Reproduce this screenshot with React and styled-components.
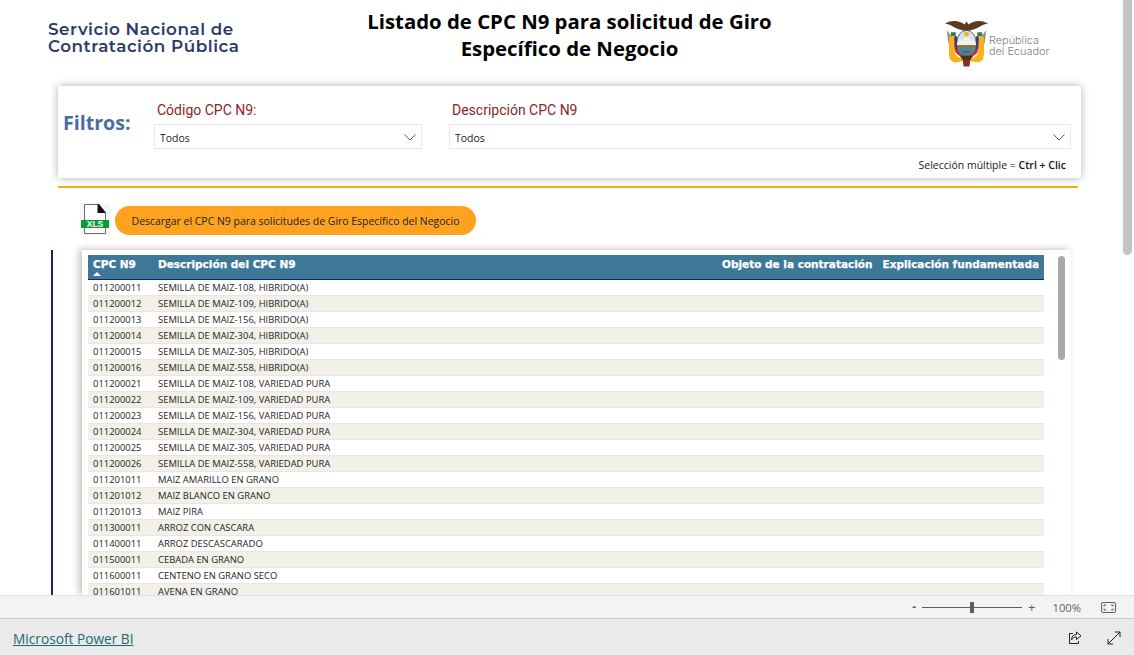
import React from 'react'
import styled, { createGlobalStyle } from 'styled-components'

const GlobalStyle = createGlobalStyle`
    html, body {
        margin: 0;
        padding: 0;
        height: 100%;
        overflow: hidden;
        background: #fff;
    }
`

const Viewer = styled.div`
    width: 1134px;
    height: 655px;
    display: flex;
    flex-direction: column;
    overflow: hidden;
    font-family: "Open Sans", "Noto Sans", sans-serif;
`

const Report = styled.main`
    position: relative;
    height: 595px;
    flex: none;
    overflow: hidden;
    background: #fff;
`

const PageScroll = styled.div`
    position: absolute;
    top: 0;
    right: 2px;
    width: 9px;
    height: 255px;
    border-radius: 0 0 5px 5px;
    background: #c4c4c4;
`

const Header = styled.header`
    height: 86px;
    display: grid;
    grid-template-columns: 340px 449px 1fr;
    align-items: start;
    box-sizing: border-box;
    padding-left: 48px;
`

const BrandName = styled.div`
    margin-top: 21px;
    font-family: "Montserrat", "Inter", sans-serif;
    font-size: 16.75px;
    line-height: 17px;
    font-weight: 600;
    letter-spacing: 0.55px;
    color: #2b3a67;
`

const Title = styled.h1`
    margin: 8px 0 0 -43px;
    width: 449px;
    text-align: center;
    font-size: 20.35px;
    line-height: 27px;
    font-weight: 700;
    color: #000;
`

const Republic = styled.div`
    display: flex;
    align-items: center;
    margin: 18px 0 0 107px;
`

const RepublicName = styled.div`
    margin-top: 5px;
    font-family: "Inter", sans-serif;
    font-size: 10.9px;
    line-height: 10.5px;
    font-weight: 300;
    color: #7d7d7d;
`

const FilterCard = styled.section`
    margin-left: 58px;
    width: 1023px;
    height: 92px;
    box-sizing: border-box;
    padding: 14px 10px 0 6px;
    display: grid;
    grid-template-columns: 90px 268px 27px 1fr;
    grid-template-rows: 24px 25px 1fr;
    background: #fff;
    box-shadow: 0 0 8px rgba(0, 0, 0, 0.32);
`

const FiltersLabel = styled.div`
    grid-row: 1 / span 2;
    align-self: center;
    margin: -4px 0 0 -1px;
    font-size: 19.6px;
    font-weight: 700;
    color: #4a6ca3;
`

const FieldLabel = styled.label`
    grid-column: ${p => p.$column};
    grid-row: 1;
    padding-left: 3px;
    font-family: "Roboto", sans-serif;
    font-size: 14px;
    line-height: 20px;
    color: #8a2525;
`

const Select = styled.div`
    grid-column: ${p => p.$column};
    grid-row: 2;
    display: flex;
    align-items: center;
    justify-content: space-between;
    box-sizing: border-box;
    padding: 2px 5px 0 5px;
    border: 1px solid #e9e9e9;
    font-size: 10.5px;
    color: #222;
`

const SelectionHint = styled.div`
    grid-column: 1 / -1;
    grid-row: 3;
    margin-top: 9px;
    padding-right: 5px;
    text-align: right;
    font-size: 10.5px;
    line-height: 14px;
    color: #222;

    b {
        font-weight: 600;
        color: #111;
    }
`

const GoldRule = styled.div`
    margin: 8px 0 0 58px;
    width: 1020px;
    height: 2px;
    background: #ecb116;
`

const DownloadRow = styled.div`
    display: flex;
    align-items: center;
    gap: 5px;
    margin: 15px 0 0 80px;
    height: 32px;
`

const DownloadButton = styled.button`
    width: 361px;
    height: 29px;
    margin-top: 3px;
    border: 0;
    padding: 0;
    border-radius: 15px;
    background: #ffa220;
    font-family: "Open Sans", sans-serif;
    font-size: 10.46px;
    color: #222;
`

const TableZone = styled.div`
    display: flex;
    margin: 15px 0 0 51px;
    height: 345px;
`

const NavyBar = styled.div`
    width: 2px;
    background: #1d2160;
`

const TableCard = styled.section`
    position: relative;
    margin-left: 29px;
    width: 989px;
    height: 345px;
    box-sizing: border-box;
    padding: 5px 27px 0 6px;
    background: #fff;
    box-shadow: -3px -1px 7px rgba(0, 0, 0, 0.24);
`

const TableScroll = styled.div`
    position: absolute;
    top: 6px;
    right: 6px;
    width: 7px;
    height: 104px;
    border-radius: 4px;
    background: #a9a9a9;
`

const Table = styled.table`
    width: 956px;
    border-collapse: collapse;
    table-layout: fixed;
`

const HeadRow = styled.tr`
    height: 24px;
    background: #3d7899;
    border-bottom: 1px solid #1d2160;
`

const HeadCell = styled.th`
    position: relative;
    padding: 2px 5px 0 5px;
    vertical-align: top;
    text-align: ${p => (p.$right ? 'right' : 'left')};
    font-family: "DejaVu Sans", sans-serif;
    font-size: 10.5px;
    line-height: 14px;
    font-weight: 700;
    color: #fff;
    white-space: nowrap;
    -webkit-text-stroke: 0.25px #fff;
`

const SortMark = styled.span`
    position: absolute;
    left: 5px;
    top: 17px;
    width: 0;
    height: 0;
    border-left: 4px solid transparent;
    border-right: 4px solid transparent;
    border-bottom: 4px solid #fff;
`

const Row = styled.tr`
    height: 16px;
    box-sizing: border-box;
    background: ${p => (p.$odd ? '#f3f0e9' : '#fff')};
    border-bottom: 1px solid #e6e6e6;
`

const Cell = styled.td`
    padding: 0 5px;
    font-family: "Open Sans", sans-serif;
    font-size: 9.42px;
    line-height: 15px;
    color: #252423;
    white-space: nowrap;
    overflow: hidden;
`

const ZoomBar = styled.div`
    position: relative;
    z-index: 1;
    height: 24px;
    flex: none;
    box-sizing: border-box;
    display: flex;
    align-items: center;
    justify-content: flex-end;
    padding-right: 18px;
    background: #f3f3f3;
    border-top: 1px solid #e1e1e1;
    border-bottom: 1px solid #c8c8c8;
    color: #605e5c;
`

const ZoomSign = styled.span`
    font-family: "Open Sans", sans-serif;
    font-size: ${p => (p.$bold ? 12 : 13)}px;
    line-height: 14px;
    font-weight: ${p => (p.$bold ? 700 : 400)};
`

const ZoomTrack = styled.div`
    position: relative;
    width: 100px;
    height: 1px;
    margin: 0 6px 0 6px;
    background: #605e5c;
`

const ZoomThumb = styled.div`
    position: absolute;
    left: 48px;
    top: -5px;
    width: 4px;
    height: 11px;
    background: #605e5c;
`

const ZoomValue = styled.span`
    margin: 0 20px 0 17px;
    font-family: "Open Sans", sans-serif;
    font-size: 11.2px;
    color: #605e5c;
`

const BottomBar = styled.footer`
    flex: 1;
    display: flex;
    align-items: center;
    justify-content: space-between;
    padding: 1px 13px 0;
    background: #eaeaea;
`

const PowerBiLink = styled.a`
    margin-top: 2px;
    font-family: "Open Sans", sans-serif;
    font-size: 13.7px;
    color: #1a6a70;
    text-decoration: underline;
`

const BottomActions = styled.div`
    display: flex;
    align-items: center;
    gap: 25px;
`

const rows = [
    ['011200011', 'SEMILLA DE MAIZ-108, HIBRIDO(A)'],
    ['011200012', 'SEMILLA DE MAIZ-109, HIBRIDO(A)'],
    ['011200013', 'SEMILLA DE MAIZ-156, HIBRIDO(A)'],
    ['011200014', 'SEMILLA DE MAIZ-304, HIBRIDO(A)'],
    ['011200015', 'SEMILLA DE MAIZ-305, HIBRIDO(A)'],
    ['011200016', 'SEMILLA DE MAIZ-558, HIBRIDO(A)'],
    ['011200021', 'SEMILLA DE MAIZ-108, VARIEDAD PURA'],
    ['011200022', 'SEMILLA DE MAIZ-109, VARIEDAD PURA'],
    ['011200023', 'SEMILLA DE MAIZ-156, VARIEDAD PURA'],
    ['011200024', 'SEMILLA DE MAIZ-304, VARIEDAD PURA'],
    ['011200025', 'SEMILLA DE MAIZ-305, VARIEDAD PURA'],
    ['011200026', 'SEMILLA DE MAIZ-558, VARIEDAD PURA'],
    ['011201011', 'MAIZ AMARILLO EN GRANO'],
    ['011201012', 'MAIZ BLANCO EN GRANO'],
    ['011201013', 'MAIZ PIRA'],
    ['011300011', 'ARROZ CON CASCARA'],
    ['011400011', 'ARROZ DESCASCARADO'],
    ['011500011', 'CEBADA EN GRANO'],
    ['011600011', 'CENTENO EN GRANO SECO'],
    ['011601011', 'AVENA EN GRANO'],
]

function Chevron() {
    return (
        <svg width="12" height="7" viewBox="0 0 12 7" fill="none">
            <path d="M.5.5 6 6l5.5-5.5" stroke="#4a5a78" strokeWidth="1" />
        </svg>
    )
}

function Emblem() {
    return (
        <svg width="45" height="50" viewBox="0 0 46 50">
            <path d="M1 5C8 1 16 2 21 6l2-3 2 3c5-4 13-5 20-1-6 1-9 4-14 6l-8 2-8-2C10 9 7 6 1 5Z" fill="#5b3a1e" />
            <path d="M3 12l6 8v14l-3-2-2-10Z" fill="#8b9096" />
            <path d="M43 12l-6 8v14l3-2 2-10Z" fill="#8b9096" />
            <path d="M7 14h5v4H7ZM34 14h5v4h-5Z" fill="#3b7a3a" />
            <path d="M5 18c1 5-1 17 1 23 1 3 6 5 11 3l6-2 6 2c5 2 10 0 11-3 2-6 0-18 1-23l-6 1c1 5 1 15-1 18-3 4-8 4-11 4s-8 0-11-4c-2-3-2-13-1-18Z" fill="#f7b21c" />
            <path d="M11 18c-1 6-1 13 1 17 2 3 7 5 11 5s9-2 11-5c2-4 2-11 1-17l-3 1c1 5 1 11-1 14-2 3-5 4-8 4s-6-1-8-4c-2-3-2-9-1-14Z" fill="#c8332e" />
            <path d="M10.5 18 12 31l2 1-1-14ZM35.5 18 34 31l-2 1 1-14Z" fill="#2d3a7a" />
            <ellipse cx="23" cy="25" rx="10" ry="13" fill="#d8e4ec" stroke="#3a3a3a" strokeWidth="0.8" />
            <circle cx="23" cy="16" r="2.5" fill="#f2b233" />
            <path d="M14 24l5-2 4-4 4 4 5 2 1 3H13Z" fill="#f4f1e6" />
            <path d="M13.5 27h19l-1 3h-17Z" fill="#7e7a4e" />
            <path d="M14.5 30h17c-1 4-4 8-8.5 8S15.5 34 14.5 30Z" fill="#3c8aa8" />
            <path d="M18 33h10l-2 2h-6Z" fill="#7a5a3a" />
            <path d="M19 41h8l-1 8h-6Z" fill="#8b2a20" />
            <path d="M16 38h14l-3 4h-8Z" fill="#4a3220" />
        </svg>
    )
}

function XlsIcon() {
    return (
        <svg width="30" height="32" viewBox="0 0 30 32">
            <rect width="30" height="32" fill="#f6f6f6" />
            <path d="M4.5 1.5h14l7 8v21h-21Z" fill="#fff" stroke="#6a6a6a" />
            <path d="M17.5 1H19l7 9h-8.500Z" fill="#111" />
            <rect x="1" y="17" width="28" height="8" fill="#0b9a36" />
            <text x="15" y="24" textAnchor="middle" fontFamily="Liberation Sans, sans-serif" fontSize="8.5" fontWeight="700" fill="#fff">XLS</text>
        </svg>
    )
}

function FitIcon() {
    return (
        <svg width="15" height="11" viewBox="0 0 15 11" fill="none" stroke="#605e5c">
            <rect x=".5" y=".5" width="14" height="10" rx="1.5" />
            <path d="M3 4.500V3h2M12 4.500V3h-2M3 6.500V8h2M12 6.500V8h-2" />
        </svg>
    )
}

function ShareIcon() {
    return (
        <svg width="14" height="14" viewBox="0 0 14 14" fill="none" stroke="#222" strokeWidth="1">
            <path d="M5 2.500H1.500v10h9V10" />
            <path d="M8.500 1v2.500C5.500 3.500 3.500 5.500 3.500 9c1-2 2.500-3 5-3v2.500L13 4.800Z" />
        </svg>
    )
}

function ExpandIcon() {
    return (
        <svg width="14" height="14" viewBox="0 0 14 14" fill="none" stroke="#222" strokeWidth="1">
            <path d="M1 13 13 1M8 1h5v5M1 8v5h5" />
        </svg>
    )
}

export default function App() {
    return (
        <Viewer>
            <GlobalStyle />
            <Report>
                <Header>
                    <BrandName>Servicio Nacional de<br />Contratación Pública</BrandName>
                    <Title>Listado de CPC N9 para solicitud de Giro Específico de Negocio</Title>
                    <Republic>
                        <Emblem />
                        <RepublicName>República<br />del Ecuador</RepublicName>
                    </Republic>
                </Header>
                <FilterCard>
                    <FiltersLabel>Filtros:</FiltersLabel>
                    <FieldLabel $column={2}>Código CPC N9:</FieldLabel>
                    <Select $column={2}>Todos<Chevron /></Select>
                    <FieldLabel $column={4}>Descripción CPC N9</FieldLabel>
                    <Select $column={4}>Todos<Chevron /></Select>
                    <SelectionHint>Selección múltiple = <b>Ctrl + Clic</b></SelectionHint>
                </FilterCard>
                <GoldRule />
                <DownloadRow>
                    <XlsIcon />
                    <DownloadButton>Descargar el CPC N9 para solicitudes de Giro Específico del Negocio</DownloadButton>
                </DownloadRow>
                <TableZone>
                    <NavyBar />
                    <TableCard>
                        <TableScroll />
                        <Table>
                            <colgroup>
                                <col width="65" />
                                <col width="564" />
                                <col width="160" />
                                <col width="167" />
                            </colgroup>
                            <thead>
                                <HeadRow>
                                    <HeadCell>CPC N9<SortMark /></HeadCell>
                                    <HeadCell>Descripción del CPC N9</HeadCell>
                                    <HeadCell $right>Objeto de la contratación</HeadCell>
                                    <HeadCell $right>Explicación fundamentada</HeadCell>
                                </HeadRow>
                            </thead>
                            <tbody>
                                {rows.map(([code, name], index) => (
                                    <Row key={code} $odd={index % 2 === 1}>
                                        <Cell>{code}</Cell>
                                        <Cell>{name}</Cell>
                                        <Cell />
                                        <Cell />
                                    </Row>
                                ))}
                            </tbody>
                        </Table>
                    </TableCard>
                </TableZone>
                <PageScroll />
            </Report>
            <ZoomBar>
                <ZoomSign $bold>-</ZoomSign>
                <ZoomTrack><ZoomThumb /></ZoomTrack>
                <ZoomSign>+</ZoomSign>
                <ZoomValue>100%</ZoomValue>
                <FitIcon />
            </ZoomBar>
            <BottomBar>
                <PowerBiLink href="#">Microsoft Power BI</PowerBiLink>
                <BottomActions>
                    <ShareIcon />
                    <ExpandIcon />
                </BottomActions>
            </BottomBar>
        </Viewer>
    )
}
